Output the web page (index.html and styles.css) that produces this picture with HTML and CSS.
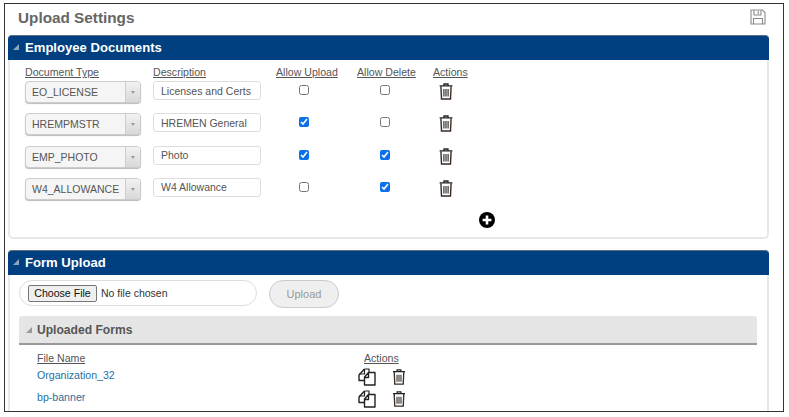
FILE: index.html
```html
<!DOCTYPE html>
<html lang="en">
<head>
<meta charset="utf-8">
<title>Upload Settings</title>
<link rel="stylesheet" href="styles.css">
</head>
<body>
<svg class="defs" width="0" height="0" aria-hidden="true">
  <symbol id="trash" viewBox="0 0 14 17">
    <path d="M5 2.2V1h4v1.2M.6 2.8h12.8" fill="none" stroke="#222" stroke-width="1.3"/>
    <path d="M1.9 3.2 2.5 16h9l.6-12.8" fill="none" stroke="#3a2a22" stroke-width="1.4"/>
    <path d="M4.9 6v7.5M7 6v7.5M9.1 6v7.5" fill="none" stroke="#333" stroke-width="1.2"/>
  </symbol>
  <symbol id="copy" viewBox="0 0 18 18">
    <path d="M6.5 1 1 7v5.5h5" fill="none" stroke="#222" stroke-width="1.4" stroke-linejoin="round"/>
    <path d="M6.5 1H11v3M6.5 1v5H1" fill="none" stroke="#222" stroke-width="1.2" stroke-linejoin="round"/>
    <path d="M10.5 4.5 6.5 9v8h10.5V4.5zM10.5 4.5v5h-4" fill="#fff" stroke="#222" stroke-width="1.4" stroke-linejoin="round"/>
  </symbol>
</svg>
<main class="frame">
  <header class="page-head">
    <h1>Upload Settings</h1>
    <svg class="save" viewBox="0 0 16 16" width="16" height="16" aria-label="Save">
      <path d="M1 1h11.5L15 3.5V15H1z" fill="none" stroke="#8a8a8a" stroke-width="1.1"/>
      <path d="M4 1.2V6h7V1.2M8.2 2v3M3.5 15V9.5h9V15" fill="none" stroke="#8a8a8a" stroke-width="1.1"/>
    </svg>
  </header>

  <section class="panel panel-docs">
    <h2 class="panel-title"><span class="tri"></span>Employee Documents</h2>
    <div class="panel-body docs-body">
      <div class="doc-grid">
        <span class="th">Document Type</span><span class="th">Description</span><span class="th">Allow Upload</span><span class="th">Allow Delete</span><span class="th">Actions</span>

        <div class="select"><span class="select-text">EO_LICENSE</span><span class="select-btn"></span></div>
        <input class="text" type="text" value="Licenses and Certs">
        <div class="cell"><input class="check" type="checkbox"></div>
        <div class="cell"><input class="check" type="checkbox"></div>
        <div class="act"><svg class="trash"><use href="#trash"/></svg></div>

        <div class="select"><span class="select-text">HREMPMSTR</span><span class="select-btn"></span></div>
        <input class="text" type="text" value="HREMEN General">
        <div class="cell"><input class="check" type="checkbox" checked></div>
        <div class="cell"><input class="check" type="checkbox"></div>
        <div class="act"><svg class="trash"><use href="#trash"/></svg></div>

        <div class="select"><span class="select-text">EMP_PHOTO</span><span class="select-btn"></span></div>
        <input class="text" type="text" value="Photo">
        <div class="cell"><input class="check" type="checkbox" checked></div>
        <div class="cell"><input class="check" type="checkbox" checked></div>
        <div class="act"><svg class="trash"><use href="#trash"/></svg></div>

        <div class="select"><span class="select-text">W4_ALLOWANCE</span><span class="select-btn"></span></div>
        <input class="text" type="text" value="W4 Allowance">
        <div class="cell"><input class="check" type="checkbox"></div>
        <div class="cell"><input class="check" type="checkbox" checked></div>
        <div class="act"><svg class="trash"><use href="#trash"/></svg></div>
      </div>
      <div class="add-row">
        <svg class="add" viewBox="0 0 16 16" width="16" height="16" aria-label="Add">
          <circle cx="8" cy="8" r="8" fill="#000"/>
          <path d="M8 3.6v8.8M3.6 8h8.8" stroke="#fff" stroke-width="2.6"/>
        </svg>
      </div>
    </div>
  </section>

  <section class="panel panel-form">
    <h2 class="panel-title"><span class="tri"></span>Form Upload</h2>
    <div class="panel-body form-body">
      <div class="upload-row">
        <div class="file-wrap"><button class="file-btn" type="button">Choose File</button><span class="file-none">No file chosen</span></div>
        <button class="upload-btn" type="button">Upload</button>
      </div>
      <div class="sub-panel">
        <h3 class="sub-title"><span class="tri tri-grey"></span>Uploaded Forms</h3>
        <div class="form-grid">
          <span class="th">File Name</span><span class="th th-actions">Actions</span>
          <a class="file-link" href="#">Organization_32</a>
          <div class="form-acts"><svg class="copy"><use href="#copy"/></svg><svg class="trash-sm"><use href="#trash"/></svg></div>
          <a class="file-link" href="#">bp-banner</a>
          <div class="form-acts"><svg class="copy"><use href="#copy"/></svg><svg class="trash-sm"><use href="#trash"/></svg></div>
        </div>
      </div>
    </div>
  </section>
</main>
</body>
</html>
```
FILE: styles.css
```css
* { box-sizing: border-box; }
html, body { margin: 0; padding: 0; background: #fff; }
body {
  width: 789px;
  height: 417px;
  overflow: hidden;
  padding: 3px 5px 5px 4px;
  font-family: "Liberation Sans", Arial, sans-serif;
  font-size: 11px;
  color: #555;
}
.defs { position: absolute; }
.frame {
  height: 409px;
  border: 1px solid #333;
  overflow: hidden;
  padding: 0 14px 0 3px;
  background: #fff;
}
.page-head {
  height: 31px;
  display: flex;
  align-items: center;
  justify-content: space-between;
  padding: 0 3px 3px 10px;
}
.page-head h1 {
  margin: 0;
  font-size: 15.3px;
  font-weight: 700;
  color: #666;
}
.save { margin-top: -3px; }
.panel-title {
  margin: 0;
  height: 25px;
  display: flex;
  align-items: center;
  padding-bottom: 2px;
  background: #004080;
  color: #fff;
  font-size: 13.1px;
  font-weight: 700;
  border-radius: 4px 4px 0 0;
  border-top: 1px solid #5d6d80;
}
.tri {
  width: 0;
  height: 0;
  margin: 0 6px 0 5px;
  border-style: solid;
  border-width: 0 0 6px 6px;
  border-color: transparent transparent #8fa5bd transparent;
}
.tri-grey { border-color: transparent transparent #999 transparent; margin: 0 5px 0 7px; }
.panel-body {
  border: 2px solid #e8e8e8;
  border-top: 0;
}
.docs-body {
  height: 179px;
  border-radius: 0 0 5px 5px;
  padding: 5px 0 0 15px;
}
.doc-grid {
  display: grid;
  grid-template-columns: 128px 123px 81px 76px 60px;
  grid-auto-rows: 32.3px;
  grid-template-rows: 16px;
  align-items: start;
}
.th {
  font-size: 10.6px;
  line-height: 14px;
  color: #555;
  text-decoration: underline;
  white-space: nowrap;
}
.select {
  width: 116px;
  height: 22px;
  display: flex;
  border: 1px solid #ccc;
  border-radius: 4px;
  background: #f5f5f5;
  box-shadow: 0 1px 1px #bbb;
  overflow: hidden;
}
.select-text {
  flex: 1;
  padding-left: 6px;
  line-height: 20px;
  font-size: 10.5px;
  color: #555;
  white-space: nowrap;
}
.select-btn {
  width: 15px;
  position: relative;
  border-left: 1px solid #ccc;
  background: linear-gradient(#f2f2f2, #d8d8d8);
}
.select-btn::after {
  content: "";
  position: absolute;
  left: 4.5px;
  top: 9px;
  border-style: solid;
  border-width: 3px 2.5px 0;
  border-color: #999 transparent transparent;
}
.text {
  width: 108px;
  height: 19px;
  padding: 0 7px;
  border: 1px solid #ddd;
  border-radius: 3px;
  font: 10.5px "Liberation Sans", Arial, sans-serif;
  color: #555;
  background: #fff;
}
.cell { width: 56px; display: flex; justify-content: center; padding-top: 4px; }
.check {
  margin: 0;
  width: 10px;
  height: 10px;
  accent-color: #0b6fe8;
}
.act { padding: 2px 0 0 6px; }
.trash { width: 14px; height: 17px; display: block; }
.add-row { display: flex; padding: 2px 0 0 454px; }
.add { display: block; }
.panel-form { margin-top: 11px; }
.form-body {
  height: 140px;
  padding: 5px 10px 0 9px;
  border-bottom: 0;
}
.upload-row { display: flex; align-items: flex-start; gap: 12px; }
.file-wrap {
  width: 238px;
  height: 26px;
  display: flex;
  align-items: center;
  padding-left: 8px;
  border: 1px solid #ddd;
  border-radius: 13px;
}
.file-btn {
  width: 69px;
  height: 17px;
  padding: 0;
  border: 1px solid #777;
  border-radius: 2px;
  background: #efefef;
  font: 10.6px "Liberation Sans", Arial, sans-serif;
  color: #111;
}
.file-none { margin-left: 4px; font-size: 10.5px; color: #333; }
.upload-btn {
  width: 70px;
  height: 28px;
  padding: 0;
  border: 1px solid #ccc;
  border-radius: 14px;
  background: #efefef;
  font: 11px "Liberation Sans", Arial, sans-serif;
  color: #999;
}
.sub-panel { margin-top: 8px; }
.sub-title {
  margin: 0;
  height: 29px;
  display: flex;
  align-items: center;
  background: #e5e5e5;
  border-bottom: 2px solid #999;
  border-radius: 3px 3px 0 0;
  font-size: 12.1px;
  font-weight: 700;
  color: #555;
}
.form-grid {
  display: grid;
  grid-template-columns: 327px 80px;
  grid-template-rows: 16px 22px 22px;
  padding: 6px 0 0 18px;
  align-items: start;
}
.file-link {
  color: #1f6f9f;
  text-decoration: none;
  font-size: 10.6px;
  line-height: 14px;
  margin-top: 1px;
}
.form-acts { display: flex; gap: 16px; align-items: center; margin: 1px 0 0 -6px; }
.copy { width: 18px; height: 18px; display: block; }
.trash-sm { width: 14px; height: 16px; display: block; }
```
